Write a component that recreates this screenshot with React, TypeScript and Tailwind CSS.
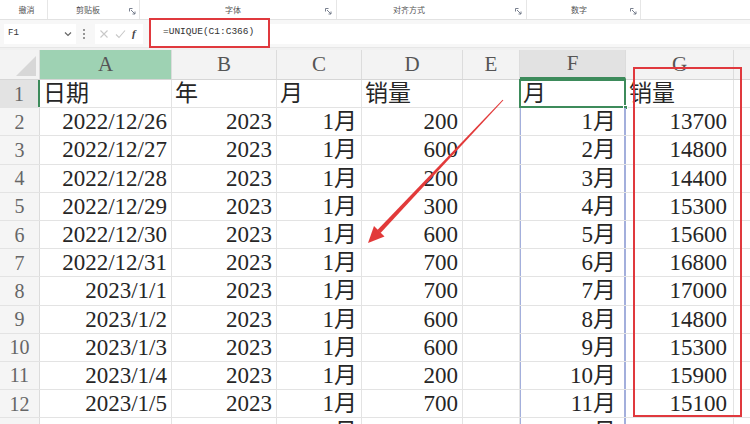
import React from "react";

const cols = [
  { key: "A", w: "w-[132px]" },
  { key: "B", w: "w-[105px]" },
  { key: "C", w: "w-[85px]" },
  { key: "D", w: "w-[101px]" },
  { key: "E", w: "w-[57px]" },
  { key: "F", w: "w-[106px]" },
  { key: "G", w: "w-[108px]" },
  { key: "", w: "w-[40px]" },
];

const rows: string[][] = [
  ["日期", "年", "月", "销量", "", "月", "销量"],
  ["2022/12/26", "2023", "1月", "200", "", "1月", "13700"],
  ["2022/12/27", "2023", "1月", "600", "", "2月", "14800"],
  ["2022/12/28", "2023", "1月", "200", "", "3月", "14400"],
  ["2022/12/29", "2023", "1月", "300", "", "4月", "15300"],
  ["2022/12/30", "2023", "1月", "600", "", "5月", "15600"],
  ["2022/12/31", "2023", "1月", "700", "", "6月", "16800"],
  ["2023/1/1", "2023", "1月", "700", "", "7月", "17000"],
  ["2023/1/2", "2023", "1月", "600", "", "8月", "14800"],
  ["2023/1/3", "2023", "1月", "600", "", "9月", "15300"],
  ["2023/1/4", "2023", "1月", "200", "", "10月", "15900"],
  ["2023/1/5", "2023", "1月", "700", "", "11月", "15100"],
  ["2023/1/6", "2023", "1月", "600", "", "12月", ""],
];

const cellFont = { fontFamily: '"Liberation Serif", "Noto Sans CJK SC", serif' };

const Launcher = () => (
  <svg width="7" height="7" viewBox="0 0 7 7" className="text-gray-500">
    <path d="M0.5 0.5h3M0.5 0.5v3M2 2l4 4M6 3.5V6H3.5" stroke="currentColor" strokeWidth="0.9" fill="none" />
  </svg>
);

const Ribbon = () => (
  <div className="h-[20px] flex items-center bg-white border-b border-[#e2e2e2] text-[8px] text-[#555]" style={{ fontFamily: '"Noto Sans CJK SC", sans-serif' }}>
    <div className="w-[48px] h-full flex items-center justify-center border-r border-[#e6e6e6] pl-[6px]">撤消</div>
    <div className="w-[92px] h-full flex items-center border-r border-[#e6e6e6]">
      <span className="ml-[28px]">剪贴板</span>
      <span className="ml-auto mr-[3px] mt-[4px]"><Launcher /></span>
    </div>
    <div className="w-[197px] h-full flex items-center border-r border-[#e6e6e6]">
      <span className="ml-[85px]">字体</span>
      <span className="ml-auto mr-[4px] mt-[4px]"><Launcher /></span>
    </div>
    <div className="w-[190px] h-full flex items-center border-r border-[#e6e6e6]">
      <span className="ml-[56px]">对齐方式</span>
      <span className="ml-auto mr-[4px] mt-[4px]"><Launcher /></span>
    </div>
    <div className="w-[114px] h-full flex items-center border-r border-[#e6e6e6]">
      <span className="ml-[44px]">数字</span>
      <span className="ml-auto mr-[3px] mt-[4px]"><Launcher /></span>
    </div>
    <div className="flex-1" />
  </div>
);

const FormulaBar = () => (
  <div className="h-[28px] flex items-center bg-[#f7f7f7] border-b border-[#e6e6e6]">
    <div className="ml-[4px] w-[72px] h-[20px] bg-white flex items-center justify-between px-[4px] text-[9px] text-[#333]" style={{ fontFamily: '"Liberation Mono", monospace' }}>
      <span>F1</span>
      <svg width="8" height="6" viewBox="0 0 8 6"><path d="M1 1.5l3 3 3-3" stroke="#666" strokeWidth="1.2" fill="none" /></svg>
    </div>
    <div className="w-[10px] flex flex-col items-center gap-[2px] ml-[3px]">
      <span className="w-[2px] h-[2px] bg-[#777] rounded-full" />
      <span className="w-[2px] h-[2px] bg-[#777] rounded-full" />
      <span className="w-[2px] h-[2px] bg-[#777] rounded-full" />
    </div>
    <div className="ml-[6px] h-[20px] w-[48px] bg-white flex items-center gap-[6px] pl-[4px]">
      <svg width="10" height="10" viewBox="0 0 10 10"><path d="M1.5 1.5l7 7M8.5 1.5l-7 7" stroke="#c8c8c8" strokeWidth="1.1" /></svg>
      <svg width="11" height="10" viewBox="0 0 11 10"><path d="M1 5.5l3 3L10 1.5" stroke="#c8c8c8" strokeWidth="1.1" fill="none" /></svg>
      <span className="text-[11px] italic text-[#444] font-bold" style={{ fontFamily: '"Liberation Serif", serif' }}>f</span>
    </div>
    <div className="ml-[6px] mt-[-2px] h-[30px] w-[121px] border-2 border-[#e0393e] bg-white flex items-center pl-[12px] text-[9.5px] text-[#333]" style={{ fontFamily: '"Liberation Mono", monospace' }}>
      =UNIQUE(C1:C366)
    </div>
    <div className="flex-1 h-[20px] bg-white" />
  </div>
);

const ColumnHeaders = () => (
  <div className="h-[30px] flex bg-[#f3f3f3] border-b border-[#d6d6d6]" style={cellFont}>
    <div className="w-[40px] shrink-0 relative border-r border-[#dcdcdc]">
      <svg className="absolute right-[3px] bottom-[3px]" width="20" height="20" viewBox="0 0 20 20">
        <path d="M20 0L20 20L0 20Z" fill="#d7d7d7" />
      </svg>
    </div>
    {cols.map((c, i) => (
      <div
        key={i}
        className={`${c.w} shrink-0 flex items-center justify-center text-[21px] text-[#555] border-r border-[#dcdcdc] ${c.key === "A" ? "bg-[#9ed2b3]" : c.key === "F" ? "bg-[#e2e2e2] border-b-2 border-b-[#3d8b5b]" : ""}`}
      >
        {c.key}
      </div>
    ))}
  </div>
);

const alignFor = (ci: number, ri: number) => {
  if (ri === 0) return "justify-start pl-[3px]";
  if (ci === 5) return "justify-end pr-[8px]";
  if (ci === 6) return "justify-end pr-[6px]";
  return "justify-end pr-[4px]";
};

const Grid = () => (
  <div style={cellFont}>
    {rows.map((r, ri) => (
      <div key={ri} className="h-[28.2px] flex border-b border-[#e3e3e3]">
        <div className={`w-[40px] shrink-0 flex items-center justify-center text-[20px] text-[#666] border-r ${ri === 0 ? "bg-[#e3e3e3] border-r-2 border-r-[#3d8b5b]" : "bg-[#f5f5f5] border-[#dcdcdc]"}`}>
          {ri + 1}
        </div>
        {cols.map((c, ci) => {
          const text = r[ci] ?? "";
          const isF1 = ci === 5 && ri === 0;
          const fBorder = ci === 5 && ri > 0 ? "border-l border-l-[#a3afdc] border-r-2 border-r-[#a3afdc]" : "border-r border-[#e3e3e3]";
          return (
            <div
              key={ci}
              className={`${c.w} shrink-0 relative flex items-center text-[23px] text-[#262626] leading-none whitespace-nowrap ${alignFor(ci, ri)} ${fBorder}`}
            >
              {isF1 && (
                <div className="absolute inset-[-1px] border-2 border-[#3d8b5b]">
                  <div className="absolute right-[-4px] bottom-[-4px] w-[5px] h-[5px] bg-[#3d8b5b] border border-white" />
                </div>
              )}
              {text}
            </div>
          );
        })}
      </div>
    ))}
  </div>
);

const Arrow = () => (
  <svg className="absolute inset-0 pointer-events-none" width="750" height="424" viewBox="0 0 750 424">
    <polygon points="503.4,100.3 502.6,99.7 377.4,229.9 380.6,232.9" fill="#e23a3a" />
    <polygon points="368,243 384.5,236.5 374,226" fill="#e23a3a" />
  </svg>
);

const App: React.FC = () => {
  return (
    <div className="relative w-[750px] h-[424px] overflow-hidden bg-white">
      <Ribbon />
      <FormulaBar />
      <div className="h-[2px] bg-[#f0f0f0]" />
      <ColumnHeaders />
      <Grid />
      <Arrow />
      <div className="absolute left-[633px] top-[67px] w-[109px] h-[350px] border-2 border-[#e0393e] pointer-events-none" />
    </div>
  );
};

export default App;
